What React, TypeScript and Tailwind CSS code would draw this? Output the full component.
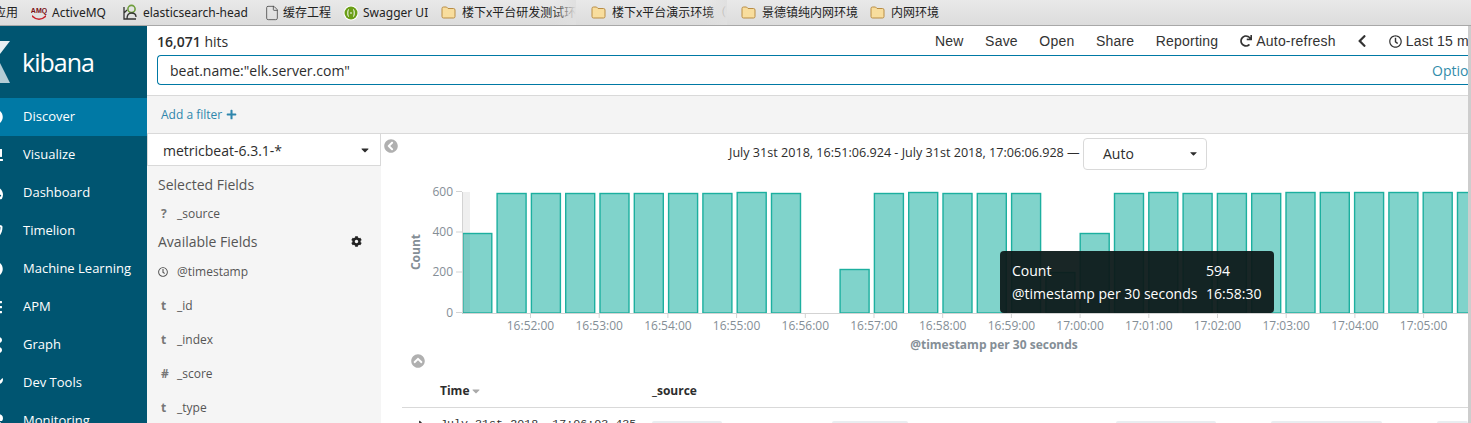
import React from "react";
import {
  FaCog, FaRedo, FaRegClock, FaPlus, FaChevronLeft, FaChevronCircleLeft, FaChevronCircleUp,
  FaCompass, FaChartBar, FaTachometerAlt, FaShieldAlt, FaDotCircle, FaBars, FaShareAlt, FaWrench, FaHeartbeat, FaCaretDown, FaCaretRight,
} from "react-icons/fa";
import { File } from "lucide-react";

function Folder() {
  return (
    <svg width="15" height="13" viewBox="0 0 15 13" className="shrink-0">
      <path d="M1 2.5 Q1 1 2.5 1 H5.5 L7 2.5 H12.5 Q14 2.5 14 4 V10.5 Q14 12 12.5 12 H2.5 Q1 12 1 10.5 Z" fill="#f8dd9d" stroke="#b98d45" strokeWidth="1" />
    </svg>
  );
}

function Mark({ w, gap = 5, icon, children, fade }: { w: number; gap?: number; icon: React.ReactNode; children: React.ReactNode; fade?: boolean }) {
  return (
    <div style={{ width: w }} className="flex h-full shrink-0 items-center">
      <div style={{ gap, maxWidth: fade ? w - 14 : undefined }} className="relative flex h-full items-center overflow-hidden whitespace-nowrap">
        {icon}
        <span>{children}</span>
        {fade && <span className="absolute right-0 top-0 h-full w-[22px] bg-gradient-to-r from-transparent to-[#e0e0e0]" />}
      </div>
    </div>
  );
}

const nav: [string, React.ReactNode][] = [
  ["Discover", <FaCompass />],
  ["Visualize", <FaChartBar />],
  ["Dashboard", <FaTachometerAlt />],
  ["Timelion", <FaShieldAlt />],
  ["Machine Learning", <FaDotCircle />],
  ["APM", <FaBars />],
  ["Graph", <FaShareAlt />],
  ["Dev Tools", <FaWrench />],
  ["Monitoring", <FaHeartbeat />],
];

const fields: [string, string][] = [
  ["clock", "@timestamp"],
  ["t", "_id"],
  ["t", "_index"],
  ["#", "_score"],
  ["t", "_type"],
];

const tops = [233, 193, 193, 193, 193, 193, 193, 193, 192, 193, 0, 269, 193, 192, 193, 193, 193, 272, 233, 193, 192, 193, 193, 193, 192, 192, 192, 192, 192, 192];
const ticks = ["16:52:00", "16:53:00", "16:54:00", "16:55:00", "16:56:00", "16:57:00", "16:58:00", "16:59:00", "17:00:00", "17:01:00", "17:02:00", "17:03:00", "17:04:00", "17:05:00"];

function Chart() {
  return (
    <svg viewBox="381 170 1087 190" width="1087" height="190" className="block font-['Open_Sans',sans-serif]">
      <rect x="463" y="192" width="7" height="121" fill="#efefef" />
      {tops.map((t, i) =>
        t ? (
          <rect key={i} x={462.8 + i * 34.3} y={t + 0.5} width={29} height={312.5 - t} fill="#80d3cb" stroke="#1caf9f" strokeWidth="1.4" />
        ) : null
      )}
      <rect x="463" y="234" width="7" height="79" fill="#000" opacity="0.04" />
      <path d="M462.5 192 V313.5 H1468" fill="none" stroke="#d3d3d3" />
      {[[191.5, "600"], [232, "400"], [272, "200"], [312.5, "0"]].map(([y, l]) => (
        <g key={l as string}>
          <line x1="456" x2="462" y1={y as number} y2={y as number} stroke="#d3d3d3" />
          <text x="453" y={(y as number) + 4} textAnchor="end" fontSize="12" fill="#848e96">{l}</text>
        </g>
      ))}
      {ticks.map((l, i) => (
        <g key={l}>
          <line x1={530.5 + i * 68.7} x2={530.5 + i * 68.7} y1="314" y2="318" stroke="#d3d3d3" />
          <text x={530.5 + i * 68.7} y="330" textAnchor="middle" fontSize="12" fill="#848e96">{l}</text>
        </g>
      ))}
      <text transform="translate(420 252) rotate(-90)" textAnchor="middle" fontSize="12" fontWeight="700" fill="#848e96">Count</text>
      <text x="994" y="349" textAnchor="middle" fontSize="12" fontWeight="700" fill="#848e96">@timestamp per 30 seconds</text>
    </svg>
  );
}

export default function App() {
  return (
    <div className="flex h-[423px] w-full flex-col overflow-hidden bg-white font-['Open_Sans',sans-serif] text-[#2d2d2d]">
      {/* bookmarks */}
      <div className="flex h-[26px] shrink-0 items-center border-b border-[#a8a8a8] bg-gradient-to-b from-[#e9e9e9] to-[#dcdcdc] text-[12px] text-[#222] font-['Noto_Sans','Noto_Sans_CJK_SC',sans-serif]">
        <div className="ml-[-6px] w-[37px] shrink-0">应用</div>
        <Mark w={91} icon={
          <svg width="16" height="16" viewBox="0 0 16 16" className="shrink-0">
            <path d="M1 10 Q8 17 15 10 L15 12 Q8 18 1 12 Z" fill="#c8202a" />
            <text x="8" y="8" textAnchor="middle" fontSize="7" fontWeight="800" fill="#7a1015" fontFamily="Liberation Sans">AMQ</text>
          </svg>
        }>ActiveMQ</Mark>
        <Mark w={142} icon={
          <svg width="16" height="17" viewBox="0 0 16 17" fill="none" className="shrink-0">
            <circle cx="9.5" cy="5" r="3.6" stroke="#6f9e3c" strokeWidth="1.6" />
            <path d="M2 3 V15 H14 M5 15 Q5 9 9.5 9 Q14 9 14 13 M2 9 L5 6" stroke="#333" strokeWidth="1.3" />
          </svg>
        }>elasticsearch-head</Mark>
        <Mark w={79} gap={3} icon={<File size={16} strokeWidth={1.2} color="#444" className="shrink-0" />}>缓存工程</Mark>
        <Mark w={98} gap={4} icon={
          <svg width="16" height="16" viewBox="0 0 16 16" className="shrink-0">
            <circle cx="8" cy="8" r="7.5" fill="#fff" />
            <circle cx="8" cy="8" r="6.5" fill="#6b9e17" />
            <path d="M6 4.5 Q4.5 4.5 4.8 8 Q4.5 11.5 6 11.5 M10 4.5 Q11.5 4.5 11.2 8 Q11.5 11.5 10 11.5 M7 8 H9" fill="none" stroke="#fff" strokeWidth="1" />
          </svg>
        }>Swagger UI</Mark>
        <Mark w={150} gap={6} fade icon={<Folder />}>楼下x平台研发测试环</Mark>
        <Mark w={150} gap={6} fade icon={<Folder />}>楼下x平台演示环境（合</Mark>
        <Mark w={129} gap={6} icon={<Folder />}>景德镇纯内网环境</Mark>
        <Mark w={100} gap={6} icon={<Folder />}>内网环境</Mark>
      </div>

      <div className="flex min-h-0 flex-1">
        {/* sidebar */}
        <aside className="flex w-[147px] shrink-0 flex-col overflow-hidden bg-[#005571] text-[13px] text-white">
          <div className="flex h-[72px] shrink-0 items-center">
            <svg width="10" height="42" viewBox="0 0 10 42" className="shrink-0">
              <path d="M0 0 H10 L0 13 Z" fill="#e8eff2" />
              <path d="M0 22 L10 42 H0 Z" fill="#b4ccd5" />
            </svg>
            <span className="ml-[12px] text-[25px] font-medium leading-none tracking-[-1px]">kibana</span>
          </div>
          {nav.map(([label, icon], i) => (
            <div key={label} className={`flex h-[38px] shrink-0 items-center ${i === 0 ? "bg-[#0079a5]" : ""}`}>
              <span className="ml-[-13px] mr-[20px] flex w-[16px] justify-center text-[16px]">{icon}</span>
              <span>{label}</span>
            </div>
          ))}
        </aside>

        {/* main */}
        <main className="flex min-w-0 flex-1 flex-col overflow-hidden">
          <div className="flex h-[70px] shrink-0 flex-col border-b border-[#d9d9d9]">
            <div className="flex h-[29px] shrink-0 items-center whitespace-nowrap pt-[1px]">
              <div className="ml-[10px] w-[778px] shrink-0 text-[14px]"><b className="font-semibold">16,071</b> hits</div>
              <nav className="flex shrink-0 items-center text-[14px] tracking-[0.2px] text-[#333] font-['Liberation_Sans',sans-serif]">
                <span>New</span>
                <span className="ml-[21.5px]">Save</span>
                <span className="ml-[21.5px]">Open</span>
                <span className="ml-[21.5px]">Share</span>
                <span className="ml-[21.5px]">Reporting</span>
                <FaRedo className="ml-[22px] text-[12px]" />
                <span className="ml-[4px]">Auto-refresh</span>
                <FaChevronLeft className="ml-[19px] text-[14px]" />
                <FaRegClock className="ml-[20px] text-[13px]" />
                <span className="ml-[4px]">Last 15 minutes</span>
              </nav>
            </div>
            <div className="ml-[10px] flex h-[30px] items-center justify-between rounded-l-[4px] border border-r-0 border-[#0079a5] pl-[12px] text-[14px] whitespace-nowrap">
              <span>beat.name:"elk.server.com"</span>
              <span className="w-[36px] overflow-hidden text-[#328caa]">Options</span>
            </div>
          </div>
          <div className="flex h-[38px] shrink-0 items-center gap-[4px] border-b border-[#d9d9d9] bg-[#f4f4f4] pl-[14px] text-[12px] text-[#2f86ac]">
            <span>Add a filter</span>
            <FaPlus className="text-[11px]" />
          </div>

          <div className="flex min-h-0 flex-1">
            {/* fields */}
            <section className="flex w-[234px] shrink-0 flex-col overflow-hidden bg-[#f5f5f5]">
              <div className="flex h-[32px] shrink-0 items-center justify-between border-x border-b border-[#d9d9d9] bg-white pl-[15px] pr-[9px] pt-[1px] text-[14px]">
                <span>metricbeat-6.3.1-*</span>
                <FaCaretDown className="text-[12px]" />
              </div>
              <div className="mt-[9px] shrink-0 pl-[11px] text-[14px] leading-[19px] text-[#555]">Selected Fields</div>
              <div className="mt-[6px] flex h-[27px] shrink-0 items-center pl-[11px] text-[12px] text-[#555]">
                <span className="w-[19px] pl-[3px] font-bold text-[#777]">?</span>_source
              </div>
              <div className="mt-[5px] flex shrink-0 items-center justify-between pl-[11px] pr-[19px] text-[14px] leading-[19px] text-[#555]">
                Available Fields
                <FaCog className="text-[11px] text-[#222]" />
              </div>
              <div className="mt-[4px] flex shrink-0 flex-col">
                {fields.map(([t, l]) => (
                  <div key={l} className="flex h-[34px] shrink-0 items-center pl-[11px] text-[12px] text-[#555]">
                    <span className="flex w-[19px] items-center font-bold text-[#777]">
                      {t === "clock" ? <FaRegClock className="text-[10px] text-[#555]" /> : <span className="pl-[3px]">{t}</span>}
                    </span>
                    {l}
                  </div>
                ))}
              </div>
            </section>

            {/* results */}
            <section className="relative min-w-0 flex-1">
              <FaChevronCircleLeft className="absolute left-[3px] top-[5px] text-[14px] text-[#b0b0b0]" />
              <div className="flex h-[36px] items-center pl-[348px] pt-[4px] text-[12.6px] whitespace-nowrap">
                <span className="mt-[-2px] w-[354px] shrink-0">July 31st 2018, 16:51:06.924 - July 31st 2018, 17:06:06.928 —</span>
                <div className="flex h-[32px] w-[124px] shrink-0 items-center justify-between rounded-[4px] border border-[#d9d9d9] pb-[1px] pl-[19px] pr-[7px] text-[14px]">
                  Auto
                  <FaCaretDown className="text-[11px]" />
                </div>
              </div>
              <Chart />
              <div className="absolute left-[619px] top-[117px] w-[274px] rounded-[4px] bg-[#0d1a1a]/95 px-[12px] pt-[8px] text-[14px] leading-[23px] text-white">
                <div className="flex"><span className="w-[194px]">Count</span><span>594</span></div>
                <div className="flex pb-[8px]"><span className="w-[194px] whitespace-nowrap">@timestamp per 30 seconds</span><span>16:58:30</span></div>
              </div>
              <FaChevronCircleUp className="absolute left-[30px] top-[220px] text-[14px] text-[#b0b0b0]" />
              <div className="ml-[21px] flex h-[48px] items-center border-b border-[#d9d9d9] pt-[15px] text-[12px] font-bold">
                <span className="ml-[38px] flex w-[212px] items-center gap-[1px]">Time<FaCaretDown className="text-[#aaa]" /></span>
                <span>_source</span>
              </div>
              <div className="flex h-[20px] items-start pl-[34px] pt-[9px] text-[#333]">
                <span className="w-[25px] shrink-0"><FaCaretRight className="mt-[1px] text-[13px]" /></span>
                <span className="w-[212px] shrink-0 whitespace-nowrap text-[11.7px] leading-[14px] font-['Liberation_Mono',monospace]">July 31st 2018, 17:06:03.435</span>
                <div className="mt-[4px] flex">
                  <span className="h-[8px] w-[70px] shrink-0 rounded-[2px] bg-[#e9edf0]" />
                  <span className="ml-[110px] h-[8px] w-[76px] shrink-0 rounded-[2px] bg-[#e9edf0]" />
                  <span className="ml-[208px] h-[8px] w-[100px] shrink-0 rounded-[2px] bg-[#e9edf0]" />
                  <span className="ml-[55px] h-[8px] w-[111px] shrink-0 rounded-[2px] bg-[#e9edf0]" />
                  <span className="ml-[55px] h-[8px] w-[31px] shrink-0 rounded-[2px] bg-[#e9edf0]" />
                </div>
              </div>
            </section>
          </div>
        </main>
        <div className="w-[3px] shrink-0 bg-[#cdcdcd]" />
      </div>
    </div>
  );
}
